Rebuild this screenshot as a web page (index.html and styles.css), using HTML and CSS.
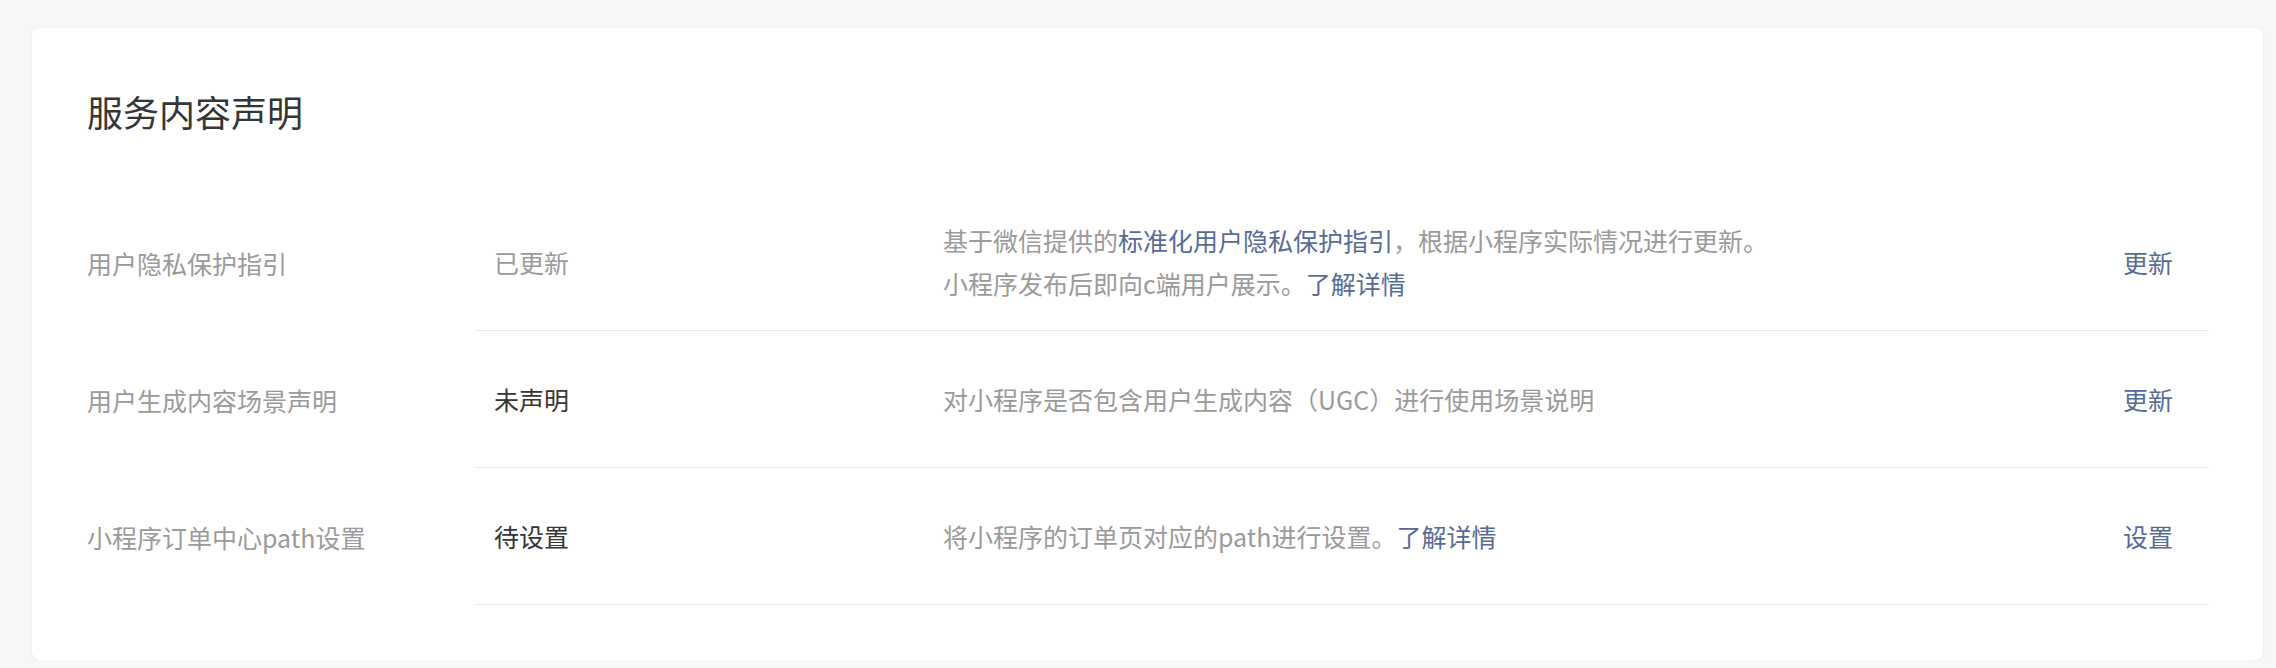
FILE: index.html
```html
<!DOCTYPE html>
<html lang="zh-CN">
<head>
    <meta charset="UTF-8">
    <meta name="viewport" content="width=device-width, initial-scale=1.0">
    <title>服务内容声明</title>
    <link rel="stylesheet" href="styles.css">
</head>
<body>
    <div class="card">
        <h2 class="card-title">服务内容声明</h2>
        <div class="decl-list">
            <div class="decl-row">
                <div class="decl-label">用户隐私保护指引</div>
                <div class="decl-main">
                    <div class="decl-status">已更新</div>
                    <div class="decl-desc">
                        基于微信提供的<a href="#" class="link">标准化用户隐私保护指引</a>，根据小程序实际情况进行更新。<br>
                        小程序发布后即向c端用户展示。<a href="#" class="link">了解详情</a>
                    </div>
                    <div class="decl-action"><a href="#" class="link">更新</a></div>
                </div>
            </div>
            <div class="decl-row">
                <div class="decl-label">用户生成内容场景声明</div>
                <div class="decl-main">
                    <div class="decl-status is-todo">未声明</div>
                    <div class="decl-desc">对小程序是否包含用户生成内容（UGC）进行使用场景说明</div>
                    <div class="decl-action"><a href="#" class="link">更新</a></div>
                </div>
            </div>
            <div class="decl-row">
                <div class="decl-label">小程序订单中心path设置</div>
                <div class="decl-main">
                    <div class="decl-status is-todo">待设置</div>
                    <div class="decl-desc">将小程序的订单页对应的path进行设置。<a href="#" class="link">了解详情</a></div>
                    <div class="decl-action"><a href="#" class="link">设置</a></div>
                </div>
            </div>
        </div>
    </div>
</body>
</html>
```

FILE: styles.css
```css
body {
    margin: 0;
    padding: 28px 13px 0 32px;
    background-color: #f6f7f9;
    font-family: "Noto Sans CJK SC", "Noto Sans", sans-serif;
    font-size: 25px;
    color: #353535;
}
.card {
    background: #fff;
    border-radius: 8px;
    box-shadow: 0 1px 3px rgba(0, 0, 0, 0.08);
    padding: 55px 54px 55px 55px;
}
.card-title {
    margin: 0 0 54px;
    font-size: 36px;
    font-weight: normal;
    line-height: 57px;
    color: #353535;
}
.decl-row {
    display: flex;
}
.decl-label {
    width: 388px;
    flex-shrink: 0;
    display: flex;
    align-items: center;
    color: #9a9a9a;
}
.decl-main {
    flex: 1;
    display: flex;
    align-items: center;
    min-height: 136px;
    border-bottom: 1px solid #e7e7e7;
}
.decl-status {
    width: 449px;
    padding-left: 19px;
    flex-shrink: 0;
    color: #9a9a9a;
}
.decl-status.is-todo {
    color: #353535;
}
.decl-desc {
    flex: 1;
    color: #9a9a9a;
    line-height: 43px;
}
.decl-action {
    width: 86px;
    flex-shrink: 0;
}
.link {
    color: #576b95;
    text-decoration: none;
}
```
